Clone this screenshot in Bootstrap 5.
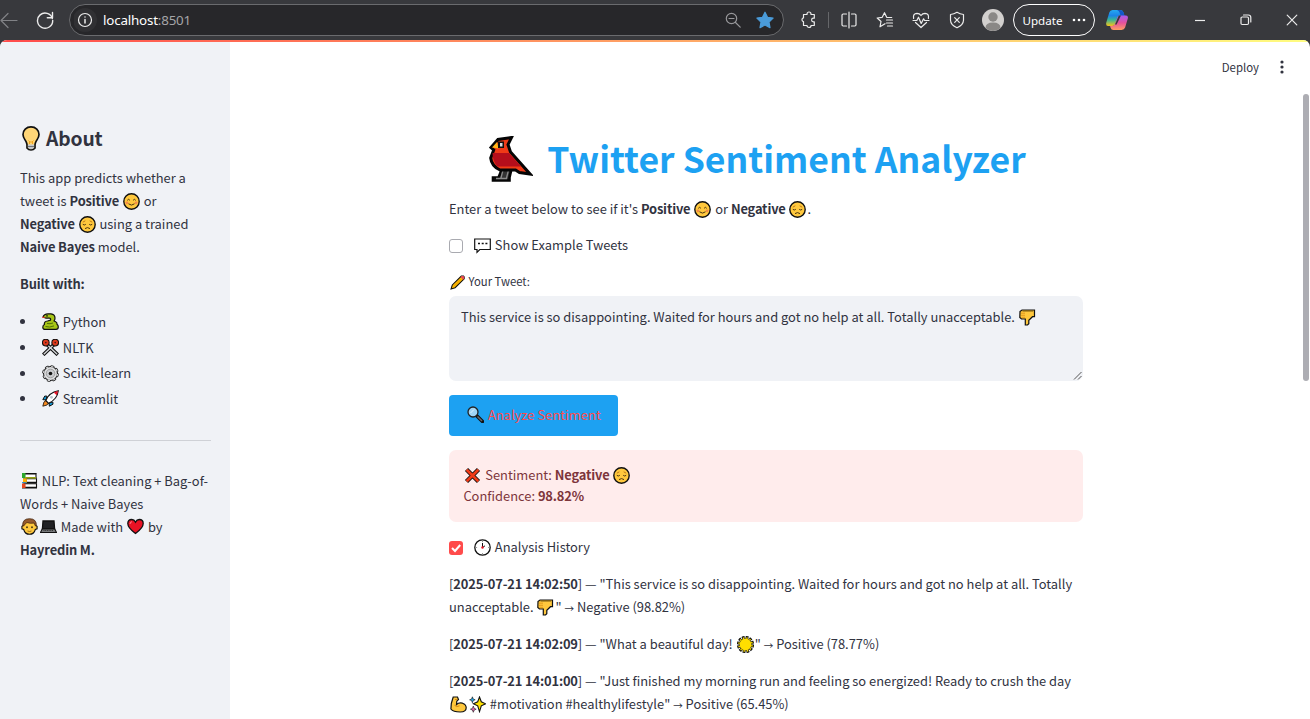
<!DOCTYPE html>
<html lang="en">
<head>
<meta charset="utf-8">
<meta name="viewport" content="width=device-width, initial-scale=1">
<title>Twitter Sentiment Analyzer</title>
<link rel="stylesheet" href="https://cdn.jsdelivr.net/npm/bootstrap@5.3.0/dist/css/bootstrap.min.css">
<style>
  :root { --ink:#31333f; --side:#f0f2f6; --blue:#1da1f2; --red:#ff4b4b; }
  html, body { height:100%; overflow:hidden; }
  body { background:#38393d; color:var(--ink); font-family:"Noto Sans CJK SC","Noto Sans",sans-serif; font-size:12.9px; line-height:23px; white-space:nowrap; }
  b { font-weight:700; letter-spacing:-.15px; }
  .chrome-bar { height:40px; background:#38393d; color:#f1f1f1; font-family:"Noto Sans","Open Sans",sans-serif; }
  .slot { width:36px; height:40px; flex:none; display:flex; align-items:center; justify-content:center; }
  .slot svg, .address svg { fill:none; stroke:#ececec; stroke-width:1.2; stroke-linecap:round; stroke-linejoin:round; }
  .address { width:715px; height:32px; border:1px solid #6a6b6e; border-radius:16px; background:#27272a; margin-left:6px; }
  .address .url { font-size:13.4px; color:#fff; letter-spacing:-.2px; margin-left:3px; }
  .address .url span { color:#a5a5a7; }
  .sep { width:1px; height:16px; background:#66676a; margin:0 2px 0 1px; }
  .pill { width:82px; height:32px; border:1.3px solid #fff; border-radius:16px; margin-left:2px; font-size:11.6px; color:#fff; }
  .page { height:679px; border-radius:7px 7px 0 0; overflow:hidden; background:#fff; }
  .ribbon { height:2px; background:linear-gradient(90deg,#ff4b4b,#fffd80); }
  .side { width:230px; height:677px; background:var(--side); padding:83px 19px 0 20px; }
  .side h2 { font-size:19.3px; line-height:26px; font-weight:700; letter-spacing:-.15px; margin:0 0 15px; }
  .side p, .content p { margin:0 0 14px; }
  .side ul { margin:0 0 28px; padding:0; list-style:none; }
  .side li { height:25.7px; line-height:25.7px; display:flex; align-items:center; }
  .side li::before { content:""; width:5px; height:5px; border-radius:50%; background:var(--ink); margin-right:16px; }
  .rule { height:1px; background:#cfd1d6; margin-bottom:28px; }
  .em { width:17px; height:17px; margin:0 1.1px 0 .9px; vertical-align:-3.5px; overflow:visible; }
  .main { height:677px; position:relative; }
  .deploy { height:50px; padding:0 26px 0 0; font-size:11.4px; }
  .content { width:634px; margin-left:219px; }
  .content h1 { font-size:35.55px; line-height:48px; font-weight:700; color:var(--blue); text-align:center; padding-right:17px; margin:42px 0 15px; }
  .tick { width:14px; height:14px; border:1px solid #a9aab0; border-radius:3px; margin-right:10px; flex:none; }
  .tick.on { border:0; background:var(--red); }
  .cap { padding-bottom:2px; margin-top:-1px; margin-bottom:-1px; }
  .lbl { font-size:11.3px; margin:-3px 0 3px; }
  .arr { font-size:9.6px; line-height:1; }
  .box { height:85px; background:var(--side); border-radius:7px; padding:9px 12px; position:relative; }
  .grip { position:absolute; right:1px; bottom:1px; }
  .go { width:169px; height:41px; background:var(--blue); color:var(--red); border-radius:4px; border:0; padding:0 0 2px; font-size:13px; }
  .fail { height:72px; background:#ffecec; color:#7d353b; border-radius:7px; padding:14px 14.4px; line-height:21.3px; }
  .thumb { position:absolute; right:1px; top:52px; width:6px; height:287px; border-radius:3px; background:#adadb3; }
</style>
</head>
<body>
<svg width="0" height="0" class="position-absolute">
  <defs>
    <g id="face"><circle cx="8.5" cy="8.5" r="7.7" fill="#ffc83d" stroke="#111" stroke-width="1.4"/></g>
    <symbol id="smile" viewBox="0 0 17 17"><use href="#face"/><circle cx="3.9" cy="9.8" r="1.4" fill="#f4894a"/><circle cx="13.1" cy="9.8" r="1.4" fill="#f4894a"/><path d="M4.3 7.3q1.3-2 2.6 0M10.1 7.3q1.3-2 2.6 0M5.5 10.8q3 2.6 6 0" fill="none" stroke="#4a3410" stroke-width="1"/></symbol>
    <symbol id="sad" viewBox="0 0 17 17"><use href="#face"/><path d="M3.8 6.2 6.3 4.8M13.2 6.2 10.7 4.8" fill="none" stroke="#c07a18" stroke-width="1"/><path d="M3.8 8.3q1.5 1.4 3 0M10.2 8.3q1.5 1.4 3 0M6 12.6q2.5-2 5 0" fill="none" stroke="#4a3410" stroke-width="1"/></symbol>
    <symbol id="bulb" viewBox="0 0 18 25"><path d="M9 .9c4.700 0 8 3.300 8 7.600 0 3-1.600 4.600-2.800 6.600-.8 1.400-1 2.300-1.200 3.400V22q-1.500 2-4 2t-4-2v-3.500c-.2-1.100-.4-2-1.200-3.400C2.600 13.100 1 11.500 1 8.500 1 4.200 4.300.9 9 .9z" fill="#ffd677" stroke="#111" stroke-width="1.700"/><path d="M6.500 14.500 8 16h2l1.500-1.500M7.500 15v3M10.500 15v3" fill="none" stroke="#f3a51e"/><path d="M5.900 18.600h6.200v3.200q-1.300 1.400-3.100 1.400t-3.100-1.400z" fill="#c3c6ca"/><path d="M6 20.500h6" stroke="#6f7377"/></symbol>
    <symbol id="snake" viewBox="0 0 17 17"><path d="M1 4Q2 .8 6 .8h3q4 .5 4 4.200 0 2-1 3l1.700.7q1.500.6 1.300 2.500 1.300.8 1.300 2.800 0 2.400-2.300 2.400H3.200Q.8 16.400.8 14.200q0-2 1.600-2.700-.6-3 3.100-3.500l3-.9q.7-1.900-1.500-2.100L4 5.200z" fill="#a7c516" stroke="#111" stroke-width="1.200" stroke-linejoin="round"/><path d="M3.500 13.500q4 1.400 8.500-.6M5 10.500q3 .7 6-.5" fill="none" stroke="#4f7008"/><circle cx="5" cy="2.900" r=".8" fill="#111"/><path d="M.3 4.400h2.500" stroke="#e8352c" stroke-width="1.200"/></symbol>
    <symbol id="scissors" viewBox="0 0 17 17"><path d="M5 5.500 15.800 15.800M12 5.500 1.200 15.800" stroke="#111" stroke-width="3.600"/><path d="M6 6.500 15.200 15.200M11 6.500 1.800 15.200" stroke="#d4d7da" stroke-width="1.400"/><g fill="none" stroke="#111" stroke-width="4"><circle cx="3.800" cy="3.600" r="1.900"/><circle cx="13.200" cy="3.600" r="1.900"/></g><g fill="#3a1a14" stroke="#dd3a1c" stroke-width="2"><circle cx="3.800" cy="3.600" r="1.800"/><circle cx="13.200" cy="3.600" r="1.800"/></g></symbol>
    <symbol id="gear" viewBox="0 0 17 17"><circle cx="8.500" cy="8.500" r="7" fill="#dcdddf" stroke="#222" stroke-width="1.100"/><circle cx="8.500" cy="8.500" r="7.600" fill="none" stroke="#222" stroke-width="1.500" stroke-dasharray="3.600 2.369"/><circle cx="8.500" cy="8.500" r="7" fill="none" stroke="#dcdddf" stroke-width="1.100" stroke-dasharray="2.400 3.098" stroke-dashoffset="-.500"/><circle cx="8.500" cy="8.500" r="4.300" fill="#c9cbce" stroke="#999" stroke-width=".9"/><circle cx="8.500" cy="8.500" r="1.800" fill="#111"/></symbol>
    <symbol id="rocket" viewBox="0 0 17 17"><path d="M5 6.200 2.800 6 .8 9.600 4 10zM10.800 12 11 14.200 7.400 16.200 7 13z" fill="#159bd7" stroke="#111"/><path d="M4 10.500Q1.500 10.800.8 16.200 6.200 15.500 6.500 13z" fill="#f58a20" stroke="#111" stroke-width=".8"/><path d="M3.800 10.500Q7 2.500 16.300.8 15.200 9.500 6.600 13.300z" fill="#fff" stroke="#111" stroke-width="1.100"/><path d="M11.700 2.400Q14 1.300 16 1 15.700 3.200 14.700 5.200z" fill="#e5172a"/><circle cx="9.500" cy="7.300" r="1.400" fill="#b7c4cc"/></symbol>
    <symbol id="books" viewBox="0 0 17 17"><path d="M1 1.500h14.500M1 16h15M2 6h13.500M2 11h14" stroke="#111" stroke-width="1.200"/><path d="M3.500 2H15v3.500H3.500zM5 6.800h10.500v3.600H5zM3.500 11.800h12v3.600h-12z" fill="#fff" stroke="#111" stroke-width="1.100"/><path d="M1 1h3.500v5H1z" fill="#2da82d"/><path d="M4 5.200h11v1.300H4z" fill="#b4c315"/><path d="M2 6.600h3.800V11H2z" fill="#ffb000"/><path d="M1 10.200h4.500v1H1z" fill="#1189d6"/><path d="M1 11.500h3.500V16H1z" fill="#e8491f"/></symbol>
    <symbol id="man" viewBox="0 0 17 17"><path d="M2.300 7.500.9 8.300v2.500l1.800.7q1.300 4.800 5.800 4.800t5.800-4.800l1.800-.7V8.300l-1.400-.8Q14 1.500 8.500 1.500T2.300 7.500z" fill="#ffc83d" stroke="#111" stroke-width="1.100"/><path d="M1.700 8Q1.200.7 8.500.7T15.300 8l-1.300-.5q-.2-1.500-1-2.500Q9 5.800 6 4.500 4 5.500 3.200 7.500z" fill="#955a2e" stroke="#4a2a12" stroke-width=".8"/><ellipse cx="6" cy="9.200" rx=".7" ry="1"/><ellipse cx="11" cy="9.200" rx=".7" ry="1"/><path d="M6.500 13q2 1 4 0" stroke="#8a5a13" stroke-width=".8" fill="none"/></symbol>
    <symbol id="laptop" viewBox="0 0 17 17"><path d="M3 3h11l.6 8H2.400z" fill="#202124" stroke="#111" stroke-width="1.300"/><path d="M2.200 11h12.600l1.700 3.500H.5z" fill="#77797b" stroke="#111" stroke-width="1.100"/><path d="M3.500 12.500h10" stroke="#333" stroke-dasharray="1 .7"/></symbol>
    <symbol id="heart" viewBox="0 0 17 17"><path d="M8.500 15.500Q.8 9.800.8 5.500.8 1.500 4.700 1.500q2.500 0 3.800 2.600Q9.800 1.500 12.300 1.500q3.900 0 3.900 4 0 4.300-7.700 10z" fill="#e81224" stroke="#111" stroke-width="1.300"/><path d="M3 6q0-2 2-2.300" stroke="#ff8290" fill="none"/></symbol>
    <symbol id="bird" viewBox="0 0 44 46"><path d="M13 33 9.500 41.500H4V44.500H20.500V41.500L22.500 33" fill="#333" stroke="#050505" stroke-width="2.600"/><path d="M14 34l-2 8M19.500 34l-2 8M7 42.500h11" stroke="#8b8b8b" stroke-width="1.300" fill="none"/><path d="M2 11.500 9 3.500l13.500-2-3.500 7 2.500 7.500L41 38l-10.500-1.500-4-2.500H11Q2.500 30 1.700 22l3-8z" fill="#f03a17" stroke="#050505" stroke-width="3"/><path d="M3.500 17h16.500L32 30.500H8.500Q3.500 25 3.500 17z" fill="#b50e1b"/><path d="M3 11.500 8 6l1.500 6.500z" fill="#ffb515"/><path d="M9 5.500h6V12H9z" fill="#111"/><path d="M11 7h2.500v3.500H11z" fill="#d9dbdf"/></symbol>
    <symbol id="speech" viewBox="0 0 17 17"><path d="M.7 2h15.600v10.500H5.800L3 15.300v-2.800H.7z" fill="#fff" stroke="#111" stroke-width="1.200"/><path d="M4 6.500h2M7.700 6.500h2M11.400 6.500h2" stroke="#111" stroke-width="1.500"/></symbol>
    <symbol id="pencil" viewBox="0 0 17 17"><path d="M1.200 15.800 2.600 11.300 12.800 1.200h2.500l.8 1v2.200L5.800 14.400z" fill="#ffb900" stroke="#111" stroke-width="1.200"/><path d="m12 2.300 1.200-1.100h2l.9 1v2l-1.200 1.200z" fill="#e74856"/><path d="M4.500 12.500 12.500 4.800" stroke="#e59a00" stroke-width=".7"/></symbol>
    <symbol id="down" viewBox="0 0 17 17"><path d="M1 2.500 3 1h12.500v6.700h-2l-3.700 3.600v3.500L8.500 16H6.300V10H2.500L.8 8.500z" fill="#ffc83d" stroke="#111" stroke-width="1.200"/><path d="M2 4.200h4M2 6.300h4M2.500 8.300h3.500" stroke="#dc8f16" stroke-width=".8"/><path d="M14.200 2H3.500" stroke="#735411"/></symbol>
    <symbol id="lens" viewBox="0 0 17 17"><path d="m9.500 9.500 6 6" stroke="#111" stroke-width="3.600" stroke-linecap="round"/><path d="m10.500 10.500 4.500 4.500" stroke="#67696d" stroke-width="1.500"/><circle cx="6" cy="6" r="5" fill="#9fd4f5" stroke="#222" stroke-width="1.300"/><path d="M3.500 7 7 3.500" stroke="#dff3ff"/></symbol>
    <symbol id="cross" viewBox="0 0 17 17"><path d="m2.500 2.500 12 12m0-12-12 12" stroke="#111" stroke-width="4.500"/><path d="m2.700 2.700 11.600 11.600m0-11.600L2.700 14.300" stroke="#f03a17" stroke-width="2.700"/></symbol>
    <symbol id="clock" viewBox="0 0 17 17"><circle cx="8.500" cy="8.500" r="7.700" fill="#fff" stroke="#111" stroke-width="1.300"/><path d="M8.500 8.500V4M8.500 8.500l2.500-1.700" stroke="#111"/><circle cx="8.500" cy="8.500" r="1.200" fill="#e81224"/><path d="M8.500 1.800v1.300M8.500 14v1.300M1.800 8.500h1.300M14 8.500h1.300" stroke="#999"/></symbol>
    <symbol id="sun" viewBox="0 0 17 17"><circle cx="8.500" cy="8.500" r="7.200" fill="none" stroke="#111" stroke-width="2.800" stroke-dasharray="2.700 1.070"/><circle cx="8.500" cy="8.500" r="6.300" fill="#ffdf00" stroke="#111" stroke-width=".8"/><circle cx="8.500" cy="8.500" r="6.600" fill="none" stroke="#ffdf00" stroke-width="1.500" stroke-dasharray="1.400 2.056" stroke-dashoffset="-.600"/></symbol>
    <symbol id="arm" viewBox="0 0 17 17"><path d="M1.300 7.500 3.200 1h4.300l1 2.500-1.700 1.700-.3 3.300q2.500-2.300 6-1.300 3.700 1.200 3.700 4.600 0 4.200-6 4.200-7 0-9.300-3z" fill="#ffc83d" stroke="#111" stroke-width="1.200"/><path d="M4.500 9.300q2 2.500 5 .5M5 3.500h2" stroke="#d98a16" fill="none"/></symbol>
    <symbol id="sparkle" viewBox="0 0 17 17"><path d="m10.500 1 1.800 4.800 4.300 2-4.300 2-1.800 5.800-1.800-5.800-4.300-2 4.300-2z" fill="#ffe100" stroke="#111" stroke-width="1.100"/><path d="m3.400.8.8 2.200 2 .8-2 .8-.8 2.200-.8-2.200-2-.8 2-.8z" fill="#21a7e8" stroke="#111" stroke-width=".6"/><path d="m4.300 10 .9 2.400 2 .8-2 .8-.9 2.300-.9-2.300-2-.8 2-.8z" fill="#e766b0" stroke="#111" stroke-width=".6"/></symbol>
    <linearGradient id="cpA" x1="0" y1="0" x2="0" y2="1"><stop stop-color="#25a9f2"/><stop offset=".35" stop-color="#1b83e8"/><stop offset=".6" stop-color="#35b39a"/><stop offset="1" stop-color="#f5c518"/></linearGradient>
    <linearGradient id="cpB" x1="0" y1="0" x2="0" y2="1"><stop stop-color="#a55cf0"/><stop offset=".5" stop-color="#e4519c"/><stop offset="1" stop-color="#ff9d63"/></linearGradient>
  </defs>
</svg>

<header class="chrome-bar d-flex align-items-center">
  <div class="slot" style="width:18px"><svg width="18" height="18" style="stroke:#818286"><path d="M1 9.500h16M8 2.500 1 9.500l7 7"/></svg></div>
  <div class="slot" style="margin-left:9px"><svg width="18" height="18"><path d="M16.400 7.500A7.600 7.600 0 1 0 16.700 9.500M16.500 1.500v5.200h-5.200" stroke-width="1.400"/></svg></div>
  <div class="address d-flex align-items-center">
    <svg width="26" height="26" class="ms-1"><circle cx="11" cy="13" r="12" fill="#303033" stroke="none"/><circle cx="11" cy="13" r="6.500"/><path d="M11 12.500v3.500M11 10v.1" stroke-width="1.500"/></svg>
    <span class="url">localhost<span>:8501</span></span>
    <svg class="ms-auto" width="16" height="16" style="stroke:#97979a"><circle cx="6.500" cy="6.500" r="5.200"/><path d="m10.500 10.500 4.700 4.700M4 6.500h5"/></svg>
    <svg width="18" height="18" style="margin:0 9px 0 15px"><path d="m9 1.200 2.500 5.100 5.600.8-4.100 4 1 5.600-5-2.700-5 2.700 1-5.600-4.100-4 5.600-.8z" fill="#4a9bd9" stroke="#4a9bd9"/></svg>
  </div>
  <div class="slot" style="margin-left:7px"><svg width="18" height="18"><path d="M3.500 3.500H7V3a2 2 0 0 1 4 0v.5h3.300v3.700h-.9a1.800 1.800 0 0 0 0 3.600h.9v3.700H11V14.500a2 2 0 0 1-4 0H3.500v-4H3a2 2 0 0 1 0-3.500h.5z"/></svg></div>
  <div class="sep"></div>
  <div class="slot"><svg width="18" height="18"><path d="M6.500 3H3.200Q2 3 2 4.200v9.600Q2 15 3.200 15h3.300M11.500 3h3.300Q16 3 16 4.200v9.600q0 1.200-1.200 1.200h-3.300M9 1v16"/></svg></div>
  <div class="slot"><svg width="18" height="18"><path d="M9 12.700 4 15.800l1-5.300L1.200 7l5-.7L8.500 1.700l2.200 4.600 5 .2M10.500 9h6M10.500 12h6M11.500 15h5"/></svg></div>
  <div class="slot"><svg width="18" height="18"><path d="M1.600 7.300Q.8 2.500 5 2.300q2.500 0 4 2.200 1.500-2.200 4-2.200 4.200.2 3.400 5M3.500 11.500 9 16.500l5.500-5M1 9.500h3.800l1.700-3.300 2.700 6.300 2.400-4.700 1 1.700H17"/></svg></div>
  <div class="slot"><svg width="18" height="18"><path d="M9 1.300q3 2 6.500 2.200v5.800Q15.300 14.200 9 16.800 2.700 14.200 2.500 9.300V3.500Q6 3.300 9 1.300zM6.700 6.700l4.600 4.600M11.300 6.700l-4.600 4.600"/></svg></div>
  <div class="slot"><svg width="22" height="22" style="stroke:none"><circle cx="11" cy="11" r="11" fill="#d2d0ce"/><circle cx="11" cy="8" r="4.700" fill="#8a8886"/><path d="M3.500 19q0-5.500 7.500-5.500t7.500 5.500a11 11 0 0 1-15 0z" fill="#8a8886"/></svg></div>
  <div class="pill d-flex align-items-center"><span style="margin:0 10px 0 8.500px">Update</span><svg width="14" height="4" fill="#fff"><circle cx="2" cy="2" r="1.300"/><circle cx="7" cy="2" r="1.300"/><circle cx="12" cy="2" r="1.300"/></svg></div>
  <div class="slot ms-1"><svg width="22" height="20" style="stroke:none"><path d="M6.500 0h8q2.300 0 3 2.500L18.500 6h-4q-2 0-2.700 2L10 13.500Q9 16 6.500 16H2Q-.5 16 .3 12.500L3.300 2.500Q4 0 6.500 0z" fill="url(#cpA)"/><path d="M14 0q3 0 3.600 2.500l1 3.500h-4l-1-3.500Q13 .5 11 0z" fill="#1457c8"/><path d="M15.500 20h-8Q5.200 20 4.500 17.500L4 15.800q3.500 1 5-1.800l2.500-7q.5-1.600 2.500-1.600h6q2.500.2 1.800 3.200l-2.700 9Q18.300 20 15.500 20z" fill="url(#cpB)"/><path d="M12.800 5.500 15 5.400 10.600 14.500H9z" fill="#38393d"/></svg></div>
  <div class="d-flex ms-auto" style="gap:10px">
    <div class="slot"><svg width="12" height="12"><path d="M1 6.500h10" stroke-linecap="butt"/></svg></div>
    <div class="slot"><svg width="12" height="12"><path d="M1 4.200Q1 3 2.200 3h5.100q1.200 0 1.200 1.200v5.100q0 1.200-1.200 1.200H2.200Q1 10.500 1 9.300zM3.500 1h4.800q2.500 0 2.500 2.500V8"/></svg></div>
    <div class="slot"><svg width="12" height="12"><path d="m1.200 1.200 9.600 9.600m0-9.600-9.600 9.600"/></svg></div>
  </div>
</header>

<div class="page">
  <div class="ribbon"></div>
  <div class="d-flex">
    <aside class="side flex-shrink-0">
      <h2><svg class="em" style="width:18px;height:25px;margin:0 6px 0 2px;vertical-align:-5px"><use href="#bulb"/></svg>About</h2>
      <p>This app predicts whether a<br>tweet is <b>Positive</b> <svg class="em"><use href="#smile"/></svg> or<br><b>Negative</b> <svg class="em"><use href="#sad"/></svg> using a trained<br><b>Naive Bayes</b> model.</p>
      <p><b>Built with:</b></p>
      <ul>
        <li><svg class="em"><use href="#snake"/></svg>&nbsp;Python</li>
        <li><svg class="em"><use href="#scissors"/></svg>&nbsp;NLTK</li>
        <li><svg class="em"><use href="#gear"/></svg>&nbsp;Scikit-learn</li>
        <li><svg class="em"><use href="#rocket"/></svg>&nbsp;Streamlit</li>
      </ul>
      <div class="rule"></div>
      <p><svg class="em"><use href="#books"/></svg> NLP: Text cleaning + Bag-of-<br>Words + Naive Bayes<br><svg class="em"><use href="#man"/></svg><svg class="em"><use href="#laptop"/></svg> Made with <svg class="em"><use href="#heart"/></svg> by<br><b>Hayredin M.</b></p>
    </aside>
    <main class="main flex-grow-1">
      <div class="deploy d-flex align-items-center justify-content-end">Deploy<svg width="4" height="14" style="margin-left:21px" fill="#31333f"><circle cx="2" cy="2" r="1.600"/><circle cx="2" cy="7" r="1.600"/><circle cx="2" cy="12" r="1.600"/></svg></div>
      <div class="thumb"></div>
      <div class="content">
        <h1><svg class="em" style="width:44px;height:46px;margin:0 6px 0 0;vertical-align:-9px"><use href="#bird"/></svg> Twitter Sentiment Analyzer</h1>
        <p>Enter a tweet below to see if it's <b>Positive</b> <svg class="em"><use href="#smile"/></svg> or <b>Negative</b> <svg class="em"><use href="#sad"/></svg>.</p>
        <div class="d-flex align-items-center mb-3"><span class="tick"></span><span class="cap"><svg class="em"><use href="#speech"/></svg> Show Example Tweets</span></div>
        <div class="lbl"><svg class="em" style="width:15px;height:15px"><use href="#pencil"/></svg> Your Tweet:</div>
        <div class="box">This service is so disappointing. Waited for hours and got no help at all. Totally unacceptable. <svg class="em"><use href="#down"/></svg><svg class="grip" width="9" height="9" stroke="#555" fill="none"><path d="M1 8.500 8.500 1M5 8.500 8.500 5"/></svg></div>
        <button class="btn go d-block" style="margin-top:14px"><svg class="em"><use href="#lens"/></svg> Analyze Sentiment</button>
        <div class="fail" style="margin-top:14px"><svg class="em"><use href="#cross"/></svg> Sentiment: <b>Negative</b> <svg class="em"><use href="#sad"/></svg><br>Confidence: <b>98.82%</b></div>
        <div class="d-flex align-items-center" style="margin:14px 0 13px"><span class="tick on d-flex"><svg width="14" height="14" fill="none" stroke="#fff" stroke-width="2"><path d="m3 7 3 3 5.200-6"/></svg></span><span class="cap"><svg class="em"><use href="#clock"/></svg> Analysis History</span></div>
        <p>[<b>2025-07-21 14:02:50</b>] — "This service is so disappointing. Waited for hours and got no help at all. Totally<br>unacceptable. <svg class="em"><use href="#down"/></svg>" <span class="arr">→</span> Negative (98.82%)</p>
        <p>[<b>2025-07-21 14:02:09</b>] — "What a beautiful day! <svg class="em"><use href="#sun"/></svg>" <span class="arr">→</span> Positive (78.77%)</p>
        <p>[<b>2025-07-21 14:01:00</b>] — "Just finished my morning run and feeling so energized! Ready to crush the day<br><svg class="em"><use href="#arm"/></svg><svg class="em"><use href="#sparkle"/></svg> #motivation #healthylifestyle" <span class="arr">→</span> Positive (65.45%)</p>
      </div>
    </main>
  </div>
</div>
<script src="https://cdn.jsdelivr.net/npm/bootstrap@5.3.0/dist/js/bootstrap.bundle.min.js"></script>
</body>
</html>
